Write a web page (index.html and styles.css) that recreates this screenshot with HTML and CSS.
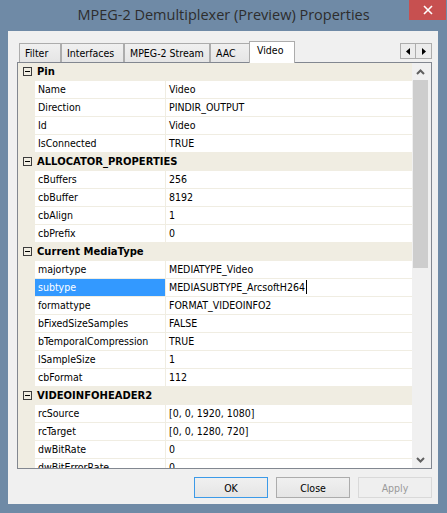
FILE: index.html
```html
<!DOCTYPE html>
<html lang="en">
<head>
    <meta charset="UTF-8">
    <title>MPEG-2 Demultiplexer (Preview) Properties</title>
    <link rel="stylesheet" href="styles.css">
</head>
<body>
    <div class="window">
        <div class="titlebar">
            <span class="title">MPEG-2 Demultiplexer (Preview) Properties</span>
            <div class="close-btn">
                <svg width="10" height="10" viewBox="0 0 10 10"><path d="M1 1 L9 9 M9 1 L1 9" stroke="#fff" stroke-width="1.6"/></svg>
            </div>
        </div>

        <div class="client">
            <div class="tabstrip">
                <div class="tabs">
                    <div class="tab w-filter">Filter</div>
                    <div class="tab w-interfaces">Interfaces</div>
                    <div class="tab w-stream">MPEG-2 Stream</div>
                    <div class="tab w-aac">AAC</div>
                    <div class="tab active w-video">Video</div>
                </div>
                <div class="tab-scroll">
                    <div class="arrow-btn"><svg width="4" height="7" viewBox="0 0 4 7"><path d="M4 0 L0 3.5 L4 7 Z" fill="#000"/></svg></div>
                    <div class="arrow-btn"><svg width="4" height="7" viewBox="0 0 4 7"><path d="M0 0 L4 3.5 L0 7 Z" fill="#000"/></svg></div>
                </div>
            </div>

            <div class="grid">
                <div class="rows">
                    <div class="row header"><span class="minus"></span>Pin</div>
                    <div class="row"><span class="gutter"></span><span class="name">Name</span><span class="value">Video</span></div>
                    <div class="row"><span class="gutter"></span><span class="name">Direction</span><span class="value">PINDIR_OUTPUT</span></div>
                    <div class="row"><span class="gutter"></span><span class="name">Id</span><span class="value">Video</span></div>
                    <div class="row"><span class="gutter"></span><span class="name">IsConnected</span><span class="value">TRUE</span></div>

                    <div class="row header"><span class="minus"></span>ALLOCATOR_PROPERTIES</div>
                    <div class="row"><span class="gutter"></span><span class="name">cBuffers</span><span class="value">256</span></div>
                    <div class="row"><span class="gutter"></span><span class="name">cbBuffer</span><span class="value">8192</span></div>
                    <div class="row"><span class="gutter"></span><span class="name">cbAlign</span><span class="value">1</span></div>
                    <div class="row"><span class="gutter"></span><span class="name">cbPrefix</span><span class="value">0</span></div>

                    <div class="row header"><span class="minus"></span>Current MediaType</div>
                    <div class="row"><span class="gutter"></span><span class="name">majortype</span><span class="value">MEDIATYPE_Video</span></div>
                    <div class="row selected"><span class="gutter"></span><span class="name">subtype</span><span class="value">MEDIASUBTYPE_ArcsoftH264<span class="caret"></span></span></div>
                    <div class="row"><span class="gutter"></span><span class="name">formattype</span><span class="value">FORMAT_VIDEOINFO2</span></div>
                    <div class="row"><span class="gutter"></span><span class="name">bFixedSizeSamples</span><span class="value">FALSE</span></div>
                    <div class="row"><span class="gutter"></span><span class="name">bTemporalCompression</span><span class="value">TRUE</span></div>
                    <div class="row"><span class="gutter"></span><span class="name">lSampleSize</span><span class="value">1</span></div>
                    <div class="row"><span class="gutter"></span><span class="name">cbFormat</span><span class="value">112</span></div>

                    <div class="row header"><span class="minus"></span>VIDEOINFOHEADER2</div>
                    <div class="row"><span class="gutter"></span><span class="name">rcSource</span><span class="value">[0, 0, 1920, 1080]</span></div>
                    <div class="row"><span class="gutter"></span><span class="name">rcTarget</span><span class="value">[0, 0, 1280, 720]</span></div>
                    <div class="row"><span class="gutter"></span><span class="name">dwBitRate</span><span class="value">0</span></div>
                    <div class="row"><span class="gutter"></span><span class="name">dwBitErrorRate</span><span class="value">0</span></div>
                </div>
                <div class="vscroll">
                    <div class="sb-arrow"><svg width="9" height="6" viewBox="0 0 9 6"><path d="M1 5 L4.5 1.5 L8 5" fill="none" stroke="#606060" stroke-width="2"/></svg></div>
                    <div class="sb-thumb"></div>
                    <div class="sb-space"></div>
                    <div class="sb-arrow"><svg width="9" height="6" viewBox="0 0 9 6"><path d="M1 1 L4.5 4.5 L8 1" fill="none" stroke="#606060" stroke-width="2"/></svg></div>
                </div>
            </div>

            <div class="buttons">
                <button class="btn default">OK</button>
                <button class="btn">Close</button>
                <button class="btn" disabled>Apply</button>
            </div>
        </div>
    </div>
</body>
</html>
```

FILE: styles.css
```css
body {
    margin: 0;
    background: #6f8aa6;
    font-family: "DejaVu Sans Condensed", "DejaVu Sans", sans-serif;
    font-stretch: condensed;
    font-size: 10.5px;
    color: #000;
}

.window {
    width: 447px;
    height: 513px;
    background: #6f8aa6;
    display: flex;
    flex-direction: column;
}

.titlebar {
    position: relative;
    height: 31px;
    text-align: center;
}

.title {
    display: inline-block;
    margin-top: 5px;
    font-family: "Open Sans", "Noto Sans", sans-serif;
    font-stretch: normal;
    font-size: 14.5px;
    color: #2d2d2d;
}

.close-btn {
    position: absolute;
    top: 0;
    right: 1px;
    width: 37px;
    height: 20px;
    background: #c75050;
    display: flex;
    align-items: center;
    justify-content: center;
}

.client {
    margin: 0 9px 0 8px;
    height: 473px;
    background: #f0f0f0;
    display: flex;
    flex-direction: column;
}

/* tabs */
.tabstrip {
    height: 31px;
    display: flex;
}

.tabs {
    display: flex;
    align-items: flex-end;
    padding-left: 11px;
}

.tab {
    box-sizing: border-box;
    height: 19px;
    padding: 3px 0 0 5px;
    border: 1px solid #acacac;
    border-bottom: none;
    background: linear-gradient(#f0f0f0, #e5e5e5);
    white-space: nowrap;
}

.tab.active {
    height: 22px;
    margin-bottom: -1px;
    margin-left: -1px;
    padding: 2px 0 0 7px;
    background: #fff;
    position: relative;
}

.w-filter { width: 42px; }
.w-interfaces { width: 63px; }
.w-stream { width: 86px; }
.w-aac { width: 40px; }
.w-video { width: 46px; }

.tab-scroll {
    margin: 12px 6px 0 auto;
    display: flex;
    align-self: flex-start;
}

.arrow-btn {
    box-sizing: border-box;
    width: 16px;
    height: 16px;
    border: 1px solid #adadad;
    background: #ececec;
    display: flex;
    align-items: center;
    justify-content: center;
}

.arrow-btn + .arrow-btn {
    border-left: none;
}

/* property grid */
.grid {
    box-sizing: border-box;
    width: 415px;
    height: 407px;
    margin-left: 9px;
    border: 1px solid #828790;
    background: #f0f0f0;
    display: flex;
}

.rows {
    width: 394px;
    overflow: hidden;
    background: #fff;
}

.row {
    height: 17px;
    line-height: 17px;
    border-bottom: 1px solid #f0ede2;
    display: flex;
    white-space: nowrap;
}

.row.header {
    background: #f0ede2;
    font-family: "DejaVu Sans", sans-serif;
    font-stretch: normal;
    font-weight: bold;
    font-size: 10px;
    align-items: center;
}

.minus {
    box-sizing: border-box;
    width: 9px;
    height: 9px;
    margin: 0 5px 0 5px;
    border: 1px solid #3c3c3c;
    position: relative;
}

.minus::after {
    content: "";
    position: absolute;
    left: 1px;
    top: 3px;
    width: 5px;
    height: 1px;
    background: #000;
}

.gutter {
    width: 17px;
    background: #f0ede2;
}

.name {
    width: 127px;
    padding-left: 3px;
    border-right: 1px solid #f0ede2;
}

.value {
    padding-left: 3px;
}

.row.selected .name {
    background: #3399ff;
    color: #fff;
}

.caret {
    display: inline-block;
    width: 1px;
    height: 14px;
    background: #000;
    vertical-align: -3px;
    margin-left: 1px;
}

.vscroll {
    width: 17px;
    display: flex;
    flex-direction: column;
}

.sb-arrow {
    height: 17px;
    display: flex;
    align-items: center;
    justify-content: center;
}

.sb-thumb {
    height: 188px;
    margin: 0 1px;
    background: #cdcdcd;
}

.sb-space {
    flex: 1;
}

/* dialog buttons */
.buttons {
    display: flex;
    justify-content: flex-end;
    gap: 8px;
    padding-right: 6px;
    margin-top: 8px;
}

.btn {
    box-sizing: border-box;
    width: 74px;
    height: 21px;
    padding: 0;
    border: 1px solid #acacac;
    background: linear-gradient(#f0f0f0, #e5e5e5);
    font: inherit;
    color: #000;
}

.btn.default {
    border-color: #3c9ae8;
}

.btn:disabled {
    border-color: #d9d9d9;
    background: #efefef;
    color: #9a9a9a;
}
```
